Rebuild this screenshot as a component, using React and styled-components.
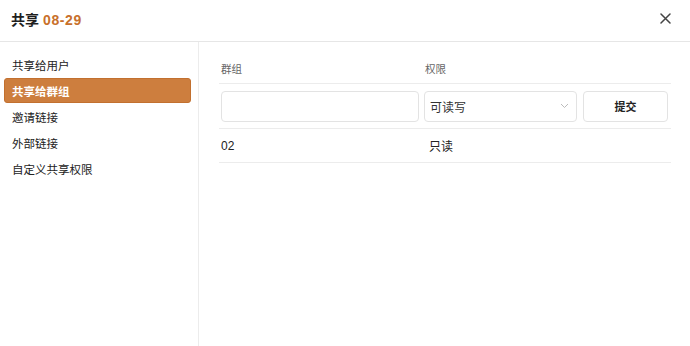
import React from "react";
import styled, { createGlobalStyle } from "styled-components";

const Global = createGlobalStyle`
  html, body { margin: 0; padding: 0; background: #fff; }
  body {
    font-family: "Liberation Sans", "Noto Sans CJK SC", sans-serif;
    color: #222;
    -webkit-font-smoothing: antialiased;
  }
  * { box-sizing: border-box; }
`;

const Dialog = styled.div`
  width: 690px;
  height: 346px;
  display: flex;
  flex-direction: column;
  background: #fff;
`;

const Header = styled.div`
  height: 42px;
  flex: none;
  display: flex;
  align-items: center;
  justify-content: space-between;
  padding: 0 18px 0 11px;
  border-bottom: 1px solid #e6e6e6;
`;

const Title = styled.div`
  font-size: 14px;
  font-weight: 700;
  color: #1f1f1f;
  display: flex;
  align-items: baseline;
  gap: 4px;
  margin-top: -3px;
`;

const Accent = styled.span`
  color: #c8702b;
  letter-spacing: 0.6px;
`;

const CloseBtn = styled.button`
  border: 0;
  background: none;
  padding: 0;
  width: 14px;
  height: 14px;
  display: flex;
  align-items: center;
  justify-content: center;
  margin-top: -4px;
  cursor: pointer;
`;

const Body = styled.div`
  flex: 1;
  display: flex;
  min-height: 0;
`;

const Sidebar = styled.nav`
  width: 199px;
  flex: none;
  border-right: 1px solid #ececec;
  padding: 10px 7px 0 4px;
  display: flex;
  flex-direction: column;
  gap: 1px;
`;

const NavItem = styled.div`
  height: 25px;
  display: flex;
  align-items: center;
  padding-left: 7px;
  font-size: 11.5px;
  border-radius: 3px;
  border: 1px solid ${(p) => (p.$active ? "#c2702f" : "transparent")};
  background: ${(p) => (p.$active ? "#cd7e3e" : "transparent")};
  color: ${(p) => (p.$active ? "#fff" : "#222")};
  font-weight: ${(p) => (p.$active ? 600 : 400)};
`;

const Main = styled.div`
  flex: 1;
  padding: 12px 19px 0 20px;
`;

const Row = styled.div`
  display: grid;
  grid-template-columns: 205px 159px 1fr;
  align-items: center;
  height: ${(p) => p.$h}px;
  border-bottom: 1px solid #ececec;
`;

const HeadCell = styled.div`
  font-size: 10.5px;
  color: #666;
  padding-left: ${(p) => p.$pl || 0}px;
`;

const Cell = styled.div`
  font-size: 12px;
  color: #222;
  padding-left: ${(p) => p.$pl || 0}px;
`;

const TextInput = styled.input`
  width: 198px;
  height: 31px;
  margin-left: 2px;
  border: 1px solid #e3e3e3;
  border-radius: 4px;
  outline: none;
  font: inherit;
  padding: 0 8px;
`;

const Select = styled.div`
  width: 153px;
  height: 31px;
  border: 1px solid #e3e3e3;
  border-radius: 4px;
  display: flex;
  align-items: center;
  justify-content: space-between;
  padding: 0 7px 0 5px;
  font-size: 12px;
  color: #333;
`;

const SubmitBtn = styled.button`
  width: 85px;
  height: 31px;
  border: 1px solid #e3e3e3;
  border-radius: 4px;
  background: #fff;
  font-family: inherit;
  font-size: 11px;
  font-weight: 700;
  color: #222;
  padding: 0;
`;

export default function App() {
  const nav = ["共享给用户", "共享给群组", "邀请链接", "外部链接", "自定义共享权限"];
  return (
    <>
      <Global />
      <Dialog>
        <Header>
          <Title>
            <span>共享</span>
            <Accent>08-29</Accent>
          </Title>
          <CloseBtn aria-label="close">
            <svg width="11" height="11" viewBox="0 0 11 11">
              <path d="M1 1L10 10M10 1L1 10" stroke="#444" strokeWidth="1.5" strokeLinecap="round" />
            </svg>
          </CloseBtn>
        </Header>
        <Body>
          <Sidebar>
            {nav.map((n, i) => (
              <NavItem key={n} $active={i === 1}>
                {n}
              </NavItem>
            ))}
          </Sidebar>
          <Main>
            <Row $h={30}>
              <HeadCell $pl={2}>群组</HeadCell>
              <HeadCell $pl={1}>权限</HeadCell>
              <div />
            </Row>
            <Row $h={45}>
              <div>
                <TextInput />
              </div>
              <div>
                <Select>
                  <span>可读写</span>
                  <svg width="9" height="6" viewBox="0 0 9 6">
                    <path d="M1 1L4.5 4.5L8 1" stroke="#bbb" strokeWidth="1" fill="none" />
                  </svg>
                </Select>
              </div>
              <div>
                <SubmitBtn>提交</SubmitBtn>
              </div>
            </Row>
            <Row $h={34}>
              <Cell $pl={2}>02</Cell>
              <Cell $pl={5}>只读</Cell>
              <div />
            </Row>
          </Main>
        </Body>
      </Dialog>
    </>
  );
}
